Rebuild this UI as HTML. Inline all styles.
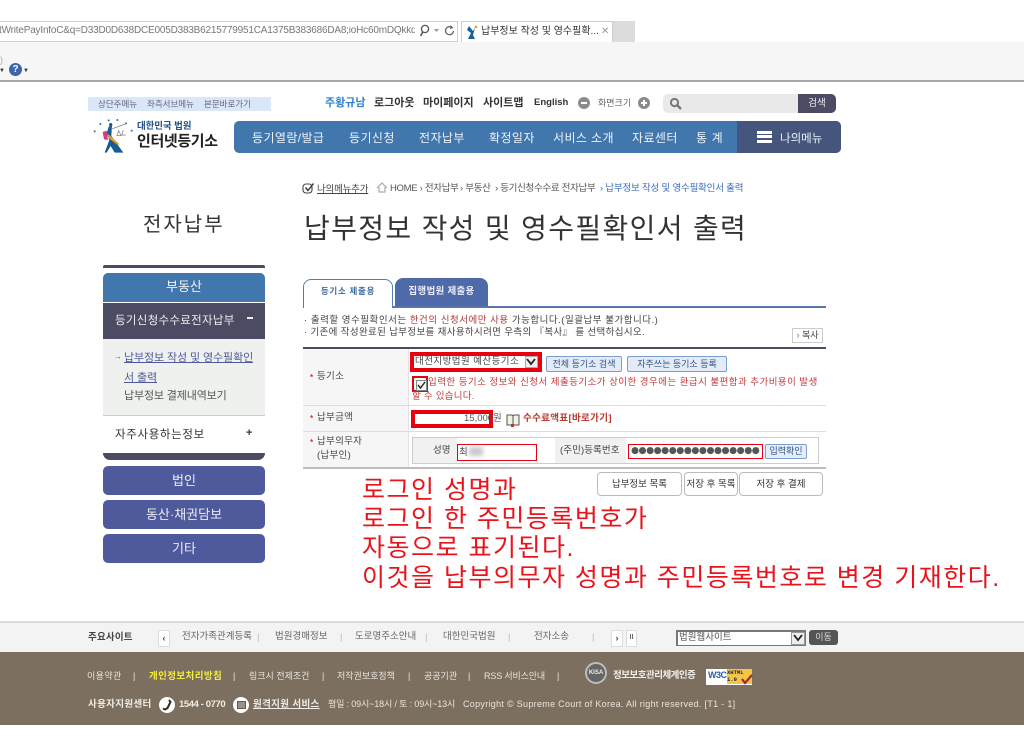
<!DOCTYPE html>
<html lang="ko"><head><meta charset="utf-8"><title>납부정보 작성 및 영수필확인서 출력</title>
<style>
html,body{margin:0;padding:0;background:#fff}
#p{position:relative;width:1024px;height:754px;overflow:hidden;background:#fff;font-family:"Liberation Sans","Noto Sans CJK KR",sans-serif;color:#444;filter:blur(.3px)}
#p div,#p span.t,#p svg{position:absolute}
.t{position:absolute;white-space:nowrap;line-height:1;margin-top:2px}
.nav{color:#eef3f8;font-size:12px;top:130px;letter-spacing:.4px}
.side{left:103px;width:162px;height:29px;background:#4f5a9c;border-radius:5px;color:#e9ebf5;font-size:13px;text-align:center;line-height:29px}
.btn{background:#e2ebf6;border:1px solid #7d9fd0;border-radius:2px;color:#33558f;font-size:9px;text-align:center;box-sizing:border-box;white-space:nowrap}
.b2{background:#fff;border:1px solid #bbb;border-radius:4px;color:#333;font-size:9.5px;text-align:center;line-height:22px;box-sizing:border-box;top:472px;height:24px}
.red{border:2px solid #e8000e;box-sizing:border-box}
.big{color:#e8131b;font-size:25px;left:362px;letter-spacing:1.5px}
.f{color:#e8e4de;font-size:9px}
.g{color:#666;font-size:9.5px}
.u{font-size:11px;font-weight:bold;color:#333;top:96px}
</style></head><body><div id="p">

<!-- browser chrome -->
<div style="left:0;top:42px;width:1024px;height:38px;background:#f6f6f6"></div>
<div style="left:0;top:80px;width:1024px;height:2px;background:#a8a8a8"></div>
<div style="left:0;top:21px;width:458px;height:21px;box-sizing:border-box;border:1px solid #d0d0d0;border-left:0;background:#fff"></div>
<span class="t" style="left:-1px;top:24px;font-size:10px;color:#777;width:416px;overflow:hidden;letter-spacing:-.2px">tWritePayInfoC&amp;q=D33D0D638DCE005D383B6215779951CA1375B383686DA8;ioHc60mDQkkdW</span>
<svg style="left:419px;top:24px" width="38" height="14" viewBox="0 0 38 14"><circle cx="6" cy="5" r="3.6" fill="none" stroke="#555" stroke-width="1.3"/><path d="M3.800 8 1.500 12" stroke="#555" stroke-width="1.600"/><path d="M15 5h5l-2.500 3z" fill="#999"/><path d="M33.500 4a4 4 0 1 0 1 3" fill="none" stroke="#666" stroke-width="1.300"/><path d="M31.500 1l3 3-3.500 1z" fill="#666"/></svg>
<div style="left:461px;top:21px;width:152px;height:21px;box-sizing:border-box;background:#fff;border:1px solid #ccc;border-bottom:0"></div>
<div style="left:613px;top:21px;width:22px;height:21px;background:#dcdcdc"></div>
<svg style="left:466px;top:25px" width="12" height="14" viewBox="0 0 12 14"><path d="M3 1 7 6 9 3 7 10 9 14H2L5 8 1 5z" fill="#1c5f94"/><circle cx="10" cy="2" r="1.400" fill="#d6a532"/></svg>
<span class="t" style="left:481px;top:25px;font-size:10px;color:#333;letter-spacing:0">납부정보 작성 및 영수필확...</span>
<span class="t" style="left:601px;top:25px;font-size:10px;color:#999">✕</span>
<span class="t" style="left:0;top:54px;font-size:9px;color:#aaa">)</span>
<span class="t" style="left:-1px;top:66px;font-size:6px;color:#333">▼</span>
<div style="left:9px;top:63px;width:13px;height:13px;border-radius:50%;background:#3d66ae;color:#fff;font-size:10px;font-weight:bold;text-align:center;line-height:13px">?</div>
<span class="t" style="left:23px;top:66px;font-size:6px;color:#333">▼</span>

<!-- top utility -->
<div style="left:88px;top:97px;width:183px;height:14px;background:#d9e7f9"></div>
<span class="t g" style="left:98px;top:98px;font-size:8.500px;color:#667">상단주메뉴</span>
<span class="t g" style="left:147px;top:98px;font-size:8.500px;color:#667">좌측서브메뉴</span>
<span class="t g" style="left:204px;top:98px;font-size:8.500px;color:#667">본문바로가기</span>
<span class="t u" style="left:325px;color:#2f80cf">주황규남</span>
<span class="t u" style="left:374px">로그아웃</span>
<span class="t u" style="left:423px">마이페이지</span>
<span class="t u" style="left:483px">사이트맵</span>
<span class="t" style="left:534px;top:96px;font-size:9.500px;font-weight:bold;color:#333">English</span>
<div style="left:578px;top:97px;width:12px;height:12px;border-radius:50%;background:#8a8a8a"></div>
<div style="left:581px;top:102px;width:6px;height:2px;background:#fff"></div>
<span class="t g" style="left:598px;top:97px;font-size:9px">화면크기</span>
<div style="left:638px;top:97px;width:12px;height:12px;border-radius:50%;background:#8a8a8a"></div>
<div style="left:641px;top:102px;width:6px;height:2px;background:#fff"></div><div style="left:643px;top:100px;width:2px;height:6px;background:#fff"></div>
<div style="left:663px;top:94px;width:173px;height:19px;background:#e9e9e9;border-radius:5px"></div>
<div style="left:798px;top:94px;width:38px;height:19px;background:#4b4b63;border-radius:0 5px 5px 0;color:#eee;font-size:9.500px;text-align:center;line-height:19px">검색</div>
<svg style="left:669px;top:97px" width="14" height="14" viewBox="0 0 14 14"><circle cx="5.500" cy="5.500" r="3.600" fill="none" stroke="#777" stroke-width="2"/><path d="M8.500 8.500 12 12" stroke="#777" stroke-width="2.400"/></svg>

<!-- logo -->
<svg style="left:90px;top:110px" width="50" height="50" viewBox="0 0 150 150">
<g fill="#2a6ea6"><circle cx="14" cy="64" r="3"/><circle cx="31" cy="42" r="3"/><circle cx="56" cy="31" r="3"/><circle cx="82" cy="30" r="3"/><circle cx="108" cy="40" r="3"/><circle cx="125" cy="62" r="3"/></g>
<path d="M56 50 66 46 64 78 100 128H74L62 108 50 128H44L58 90 50 70z" fill="#155c97"/>
<path d="M38 66 50 62 54 90 42 88z" fill="#cf3c8e"/>
<path d="M52 70 88 102 84 106 56 84z" fill="#eb9a2a"/>
<path d="M62 58 106 42M86 62l-5 15h12zM100 60l-5 15h12" stroke="#777" stroke-width="2" fill="none"/>
<circle cx="62" cy="44" r="5" fill="#155c97"/>
</svg>
<span class="t" style="left:137px;top:120px;font-size:9.500px;font-weight:bold;color:#1e4f87;letter-spacing:-.1px">대한민국 법원</span>
<span class="t" style="left:137px;top:132px;font-size:15px;font-weight:bold;color:#222;letter-spacing:-.35px">인터넷등기소</span>

<!-- nav -->
<div style="left:234px;top:121px;width:607px;height:32px;background:#4177ad;border-radius:5px"></div>
<div style="left:737px;top:121px;width:104px;height:32px;background:#45557d;border-radius:0 5px 5px 0"></div>
<span class="t nav" style="left:252px">등기열람/발급</span>
<span class="t nav" style="left:349px">등기신청</span>
<span class="t nav" style="left:419px">전자납부</span>
<span class="t nav" style="left:489px">확정일자</span>
<span class="t nav" style="left:553px">서비스 소개</span>
<span class="t nav" style="left:632px">자료센터</span>
<span class="t nav" style="left:696px;letter-spacing:.6px">통 계</span>
<div style="left:757px;top:131px;width:15px;height:3px;background:#fff"></div>
<div style="left:757px;top:135px;width:15px;height:3px;background:#fff"></div>
<div style="left:757px;top:140px;width:15px;height:3px;background:#fff"></div>
<span class="t nav" style="left:780px;top:132px;font-size:11.500px;letter-spacing:0">나의메뉴</span>

<!-- side -->
<span class="t" style="left:143px;top:213px;font-size:20px;color:#333;letter-spacing:2px">전자납부</span>
<div style="left:103px;top:265px;width:162px;height:3px;background:#4b4b63;border-radius:2px 2px 0 0"></div>
<div style="left:103px;top:273px;width:162px;height:29px;background:#4177ad;border-radius:5px 5px 0 0;color:#f0f4f8;font-size:13px;text-align:center;line-height:27px">부동산</div>
<div style="left:103px;top:303px;width:162px;height:36px;background:#4b4b63"></div>
<span class="t" style="left:115px;top:314px;font-size:11.500px;color:#eee;letter-spacing:.3px">등기신청수수료전자납부</span>
<div style="left:247px;top:317px;width:6px;height:2px;background:#eee"></div>
<div style="left:103px;top:339px;width:162px;height:76px;background:#eff1ef;border-bottom:1px solid #ccc"></div>
<span class="t" style="left:114px;top:351px;font-size:8px;color:#4f5a9c">→</span>
<span class="t" style="left:124px;top:346px;font-size:11px;color:#4f5a9c;text-decoration:underline;line-height:20px;width:136px;white-space:normal;letter-spacing:-.1px">납부정보 작성 및 영수필확인서 출력</span>
<span class="t" style="left:124px;top:389px;font-size:11px;color:#555;letter-spacing:-.15px">납부정보 결제내역보기</span>
<span class="t" style="left:115px;top:428px;font-size:11.500px;color:#333;letter-spacing:.65px">자주사용하는정보</span>
<span class="t" style="left:246px;top:426px;font-size:11px;color:#333;font-weight:bold">+</span>
<div style="left:103px;top:453px;width:162px;height:7px;background:#4b4b63;border-radius:0 0 8px 8px"></div>
<div class="side" style="top:466px">법인</div>
<div class="side" style="top:500px">동산·채권담보</div>
<div class="side" style="top:534px">기타</div>

<!-- breadcrumb -->
<svg style="left:302px;top:182px" width="13" height="13" viewBox="0 0 13 13"><rect x="1" y="2" width="9" height="9" rx="3" fill="none" stroke="#444" stroke-width="1.100"/><path d="M3.500 5.500 6 8.500 11.500 1.500" fill="none" stroke="#333" stroke-width="1.400"/></svg>
<span class="t" style="left:317px;top:183px;font-size:9.500px;color:#444;text-decoration:underline;letter-spacing:-.2px">나의메뉴추가</span>
<svg style="left:376px;top:182px" width="12" height="11" viewBox="0 0 12 11"><path d="M1 6 6 1l5 5M3 5v5h6V5" fill="none" stroke="#aaa" stroke-width="1.200"/></svg>
<span class="t" style="left:390px;top:182px;font-size:9.500px;color:#555;letter-spacing:-.3px">HOME › 전자납부</span>
<span class="t" style="left:460px;top:182px;font-size:9.500px;color:#555;letter-spacing:-.3px">› 부동산</span>
<span class="t" style="left:495px;top:182px;font-size:9.500px;color:#555;letter-spacing:-.3px">› 등기신청수수료 전자납부</span>
<span class="t" style="left:600px;top:182px;font-size:9.500px;color:#3a6cc0;letter-spacing:-.2px">› 납부정보 작성 및 영수필확인서 출력</span>
<span class="t" style="left:304px;top:213px;font-size:28px;color:#333;letter-spacing:1.350px">납부정보 작성 및 영수필확인서 출력</span>

<!-- tabs -->
<div style="left:395px;top:278px;width:93px;height:29px;background:#4f6aa8;border-radius:8px 8px 0 0;color:#eef;font-size:9.500px;font-weight:bold;text-align:center;line-height:28px;letter-spacing:.3px">집행법원 제출용</div>
<div style="left:303px;top:306px;width:523px;height:2px;background:#5b76ae"></div>
<div style="left:303px;top:279px;width:90px;height:29px;box-sizing:border-box;background:#fff;border:1.500px solid #4f7fb0;border-bottom:0;border-radius:8px 8px 0 0;color:#3d6ca3;font-size:8.500px;font-weight:bold;text-align:center;line-height:23px;letter-spacing:.7px">등기소 제출용</div>
<span class="t" style="left:304px;top:314px;font-size:9.500px;color:#444;letter-spacing:.52px">· 출력할 영수필확인서는 <span style="color:#b23838">한건의 신청서에만 사용</span> 가능합니다.(일괄납부 불가합니다.)</span>
<span class="t" style="left:304px;top:326px;font-size:9.500px;color:#444;letter-spacing:.35px">· 기존에 작성완료된 납부정보를 재사용하시려면 우측의 『복사』 를 선택하십시오.</span>
<div style="left:792px;top:328px;width:31px;height:15px;box-sizing:border-box;border:1px solid #ccc;background:#fff;font-size:9px;color:#444;text-align:center;line-height:13px"><span style="color:#4a7fb0">›</span> 복사</div>

<!-- form -->
<div style="left:303px;top:347px;width:523px;height:2px;background:#4b4b63"></div>
<div style="left:303px;top:349px;width:105px;height:118px;background:#f6f6f6"></div>
<div style="left:408px;top:349px;width:1px;height:118px;background:#e3e3e3"></div>
<div style="left:303px;top:405px;width:523px;height:1px;background:#ddd"></div>
<div style="left:303px;top:431px;width:523px;height:1px;background:#ddd"></div>
<div style="left:303px;top:467px;width:523px;height:2px;background:#bdbdbd"></div>
<span class="t" style="left:310px;top:372px;font-size:8px;color:#c33;font-weight:bold">*</span>
<span class="t" style="left:317px;top:370px;font-size:9.500px;color:#444;letter-spacing:.3px">등기소</span>
<span class="t" style="left:310px;top:413px;font-size:8px;color:#c33;font-weight:bold">*</span>
<span class="t" style="left:317px;top:411px;font-size:9.500px;color:#444;letter-spacing:.3px">납부금액</span>
<span class="t" style="left:310px;top:437px;font-size:8px;color:#c33;font-weight:bold">*</span>
<span class="t" style="left:317px;top:435px;font-size:9.500px;color:#444;letter-spacing:.3px">납부의무자</span>
<span class="t" style="left:317px;top:449px;font-size:9.500px;color:#444;letter-spacing:.3px">(납부인)</span>

<div style="left:410px;top:352px;width:132px;height:20px;box-sizing:border-box;border:4px solid #e8000e;background:#fff"></div>
<span class="t" style="left:415px;top:355px;font-size:9.500px;color:#444;letter-spacing:.45px">대전지방법원 예산등기소</span>
<div style="left:525px;top:356px;width:13px;height:12px;background:#eee;border:1px solid #aaa;box-sizing:border-box"></div>
<svg style="left:526px;top:358px" width="10" height="8" viewBox="0 0 10 8"><path d="M1 1 5 6 9 1" fill="none" stroke="#222" stroke-width="1.800"/></svg>
<div class="btn" style="left:546px;top:356px;width:76px;height:16px;line-height:14px">전체 등기소 검색</div>
<div class="btn" style="left:627px;top:356px;width:100px;height:16px;line-height:14px">자주쓰는 등기소 등록</div>
<div class="red" style="left:412px;top:376px;width:16px;height:16px"></div>
<div style="left:416px;top:380px;width:9px;height:9px;border:1px solid #888;background:#f4f4f4"></div>
<svg style="left:416px;top:380px" width="11" height="10" viewBox="0 0 11 10"><path d="M2 5 4.500 8 9 2" fill="none" stroke="#222" stroke-width="1.400"/></svg>
<span class="t" style="left:428px;top:376px;font-size:9.500px;color:#c53a3a;letter-spacing:.46px">입력한 등기소 정보와 신청서 제출등기소가 상이한 경우에는 환급시 불편함과 추가비용이 발생</span>
<span class="t" style="left:412px;top:390px;font-size:9.500px;color:#c53a3a;letter-spacing:.25px">할 수 있습니다.</span>

<div class="red" style="left:411px;top:410px;width:82px;height:18px;border-width:4px;background:#fff"></div>
<span class="t" style="left:464px;top:412px;font-size:9.500px;color:#555">15,000</span>
<span class="t" style="left:493px;top:412px;font-size:9.500px;color:#555">원</span>
<svg style="left:506px;top:414px" width="14" height="13" viewBox="0 0 14 13"><path d="M1 1h5l1 1 1-1h5v10H8l-1 1-1-1H1z" fill="#f4f0e4" stroke="#555"/><path d="M7 2v9" stroke="#555"/><rect x="5" y="10" width="3" height="3" fill="#b33"/></svg>
<span class="t" style="left:523px;top:412px;font-size:9.500px;font-weight:bold;color:#b83a2c;letter-spacing:.35px">수수료액표[바로가기]</span>

<div style="left:412px;top:437px;width:407px;height:27px;box-sizing:border-box;border:1px solid #ccc;background:#fff"></div>
<div style="left:413px;top:438px;width:44px;height:25px;background:#f1f1f1"></div>
<div style="left:555px;top:438px;width:71px;height:25px;background:#f1f1f1"></div>
<span class="t" style="left:433px;top:444px;font-size:9.500px;color:#444">성명</span>
<div class="red" style="left:457px;top:444px;width:80px;height:17px;border-width:1.500px"></div>
<span class="t" style="left:459px;top:446px;font-size:9.500px;color:#444">최</span>
<div style="left:469px;top:447px;width:14px;height:9px;background:#c9c9cf;filter:blur(2px)"></div>
<span class="t" style="left:560px;top:444px;font-size:9.500px;color:#444;letter-spacing:.1px">(주민)등록번호</span>
<div class="red" style="left:628px;top:444px;width:135px;height:15px;border-width:1.500px"></div>
<span class="t" style="left:631px;top:444px;font-size:9.200px;color:#555;letter-spacing:-.47px;font-family:'DejaVu Sans',sans-serif">●●●●●●●●●●●●●●●●●</span>
<div class="btn" style="left:765px;top:444px;width:42px;height:15px;line-height:13px;font-size:9px;background:#e4edf9">입력확인</div>

<div class="b2" style="left:597px;width:85px;line-height:23px">납부정보 목록</div>
<div class="b2" style="left:684px;width:54px;line-height:23px">저장 후 목록</div>
<div class="b2" style="left:739px;width:84px;line-height:23px">저장 후 결제</div>

<!-- annotation -->
<span class="t big" style="top:476px">로그인 성명과</span>
<span class="t big" style="top:505px">로그인 한 주민등록번호가</span>
<span class="t big" style="top:534px">자동으로 표기된다.</span>
<span class="t big" style="top:564px">이것을 납부의무자 성명과 주민등록번호로 변경 기재한다.</span>

<!-- footer -->
<div style="left:0;top:621px;width:1024px;height:31px;background:#f3f3f3;border-top:2px solid #dcdcdc;box-sizing:border-box"></div>
<div style="left:0;top:652px;width:1024px;height:73px;background:#7d6f5f"></div>
<span class="t" style="left:88px;top:631px;font-size:9.500px;font-weight:bold;color:#444;letter-spacing:.2px">주요사이트</span>
<div style="left:158px;top:630px;width:10px;height:15px;background:#fff;border:1px solid #ddd;font-size:9px;font-weight:bold;text-align:center;line-height:14px;color:#444">‹</div>
<span class="t g" style="left:182px;top:630px">전자가족관계등록</span><span class="t g" style="left:257px;top:631px;color:#bbb">|</span>
<span class="t g" style="left:275px;top:630px">법원경매정보</span><span class="t g" style="left:340px;top:631px;color:#bbb">|</span>
<span class="t g" style="left:355px;top:630px">도로명주소안내</span><span class="t g" style="left:425px;top:631px;color:#bbb">|</span>
<span class="t g" style="left:443px;top:630px">대한민국법원</span><span class="t g" style="left:508px;top:631px;color:#bbb">|</span>
<span class="t g" style="left:534px;top:630px">전자소송</span><span class="t g" style="left:592px;top:631px;color:#bbb">|</span>
<div style="left:611px;top:630px;width:10px;height:15px;background:#fff;border:1px solid #ddd;font-size:9px;font-weight:bold;text-align:center;line-height:14px;color:#444">›</div>
<div style="left:626px;top:630px;width:9px;height:15px;background:#fff;border:1px solid #ddd;font-size:7px;font-weight:bold;text-align:center;line-height:14px;color:#666">II</div>
<div style="left:676px;top:630px;width:130px;height:16px;box-sizing:border-box;background:#fff;border:1px solid #777;border-top-width:2px;border-left-width:2px;font-size:9.500px;color:#555;line-height:12px;padding-left:1px">법원웹사이트</div>
<div style="left:791px;top:632px;width:14px;height:13px;background:#eee;border:1px solid #999;box-sizing:border-box"></div>
<svg style="left:793px;top:634px" width="10" height="8" viewBox="0 0 10 8"><path d="M1 1 5 6 9 1" fill="none" stroke="#222" stroke-width="1.800"/></svg>
<div style="left:809px;top:630px;width:29px;height:15px;background:#555;border-radius:3px;color:#ddd;font-size:9px;text-align:center;line-height:14px">이동</div>

<span class="t f" style="left:87px;top:670px;letter-spacing:.4px">이용약관</span><span class="t f" style="left:133px;top:670px">|</span>
<span class="t" style="left:149px;top:670px;font-size:9.500px;font-weight:bold;color:#f5ee3a;letter-spacing:.4px">개인정보처리방침</span><span class="t f" style="left:233px;top:670px">|</span>
<span class="t f" style="left:249px;top:670px">링크시 전제조건</span><span class="t f" style="left:322px;top:670px">|</span>
<span class="t f" style="left:337px;top:670px">저작권보호정책</span><span class="t f" style="left:408px;top:670px">|</span>
<span class="t f" style="left:424px;top:670px">공공기관</span><span class="t f" style="left:468px;top:670px">|</span>
<span class="t f" style="left:484px;top:670px;letter-spacing:-.15px">RSS 서비스안내</span><span class="t f" style="left:557px;top:670px">|</span>
<div style="left:585px;top:662px;width:22px;height:22px;box-sizing:border-box;border-radius:50%;background:#666;border:2px solid #bbb;color:#eee;font-size:6px;font-weight:bold;text-align:center;line-height:18px">KISA</div>
<span class="t" style="left:613px;top:669px;font-size:9.500px;font-weight:bold;color:#f2efe9;letter-spacing:-.5px">정보보호관리체계인증</span>
<div style="left:706px;top:669px;width:46px;height:16px;background:#fff"></div>
<span class="t" style="left:708px;top:669px;font-size:9px;font-weight:bold;color:#2a5da8;letter-spacing:-.5px;font-family:'Liberation Sans',sans-serif">W3C</span>
<div style="left:727px;top:669px;width:25px;height:15px;background:#f3c64a"></div>
<span class="t" style="left:727px;top:668px;font-size:5.500px;font-weight:bold;color:#222;font-family:'Liberation Mono',monospace">XHTML</span>
<span class="t" style="left:727px;top:675px;font-size:5.500px;font-weight:bold;color:#222;font-family:'Liberation Mono',monospace">1.0</span>
<svg style="left:741px;top:674px" width="12" height="11" viewBox="0 0 12 11"><path d="M1 5 4 9 11 1" fill="none" stroke="#a5282a" stroke-width="2.200"/></svg>

<span class="t" style="left:88px;top:698px;font-size:9.500px;font-weight:bold;color:#f0ede8;letter-spacing:.35px">사용자지원센터</span>
<div style="left:159px;top:697px;width:16px;height:16px;border-radius:50%;background:#fff"></div>
<svg style="left:159px;top:697px" width="16" height="16" viewBox="0 0 16 16"><path d="M10 3 11.500 5 8.500 11 6 12.500 4 11.500" fill="none" stroke="#332a22" stroke-width="2"/></svg>
<span class="t" style="left:179px;top:698px;font-size:9.500px;font-weight:bold;color:#f0ede8;letter-spacing:-.4px">1544 - 0770</span>
<div style="left:233px;top:697px;width:16px;height:16px;border-radius:50%;background:#fff"></div>
<div style="left:237px;top:701px;width:7px;height:6px;border:1px solid #665b4f;background:#9b9186"></div>
<span class="t" style="left:253px;top:698px;font-size:9.500px;font-weight:bold;color:#f0ede8;text-decoration:underline;letter-spacing:.35px">원격지원 서비스</span>
<span class="t f" style="left:328px;top:698px;letter-spacing:-.15px">평일 : 09시~18시 / 토 : 09시~13시</span>
<span class="t f" style="left:463px;top:698px;letter-spacing:.3px">Copyright © Supreme Court of Korea.  All right reserved.  [T1 - 1]</span>

</div></body></html>
